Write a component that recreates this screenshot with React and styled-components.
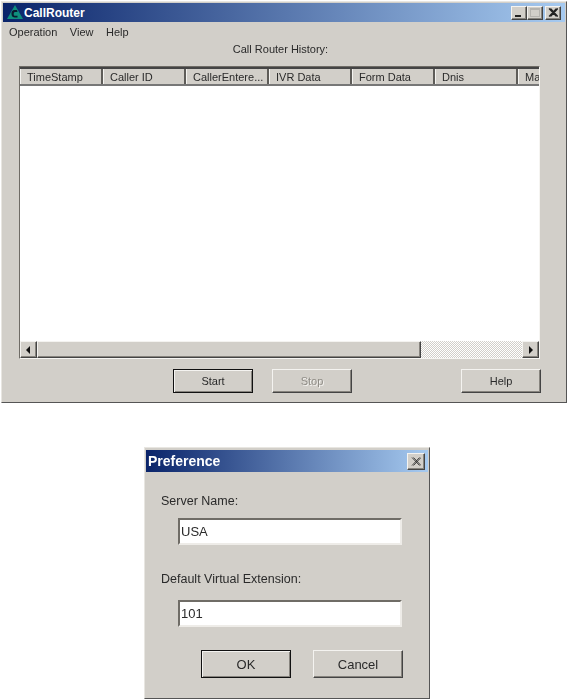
import React from "react";
import styled, { createGlobalStyle, css } from "styled-components";

const Global = createGlobalStyle`
  html, body { margin: 0; padding: 0; background: #fff; }
  body { width: 567px; height: 700px; overflow: hidden; font-family: "Liberation Sans", Arial, sans-serif; font-size: 11px; color: #2a2a2a; }
`;

const Page = styled.div`
  display: flex;
  flex-direction: column;
  align-items: flex-start;
  width: 567px;
  height: 700px;
  filter: blur(0.35px);
`;

const Frame = styled.div`
  box-sizing: border-box;
  display: flex;
  flex-direction: column;
  background: #d2cfc9;
  border: 1px solid;
  border-color: #e8e6e1 #555 #555 #e8e6e1;
  padding: 1px;
`;

const MainWindow = styled(Frame)`
  width: 566px;
  height: 402px;
  margin: 1px 0 0 1px;
`;

const Dialog = styled(Frame)`
  width: 286px;
  height: 252px;
  margin: 44px 0 0 144px;
  padding-top: 2px;
`;

const TitleBar = styled.div`
  display: flex;
  align-items: center;
  flex: none;
  height: ${p => p.$h}px;
  padding: 0 ${p => p.$pr}px 0 ${p => p.$pl}px;
  background: linear-gradient(90deg, #0a246a 0%, #a6caf0 100%);
  color: #fff;
  font: bold ${p => p.$fs}px "Liberation Sans", Arial, sans-serif;
`;

const TitleText = styled.span`
  flex: 1;
  margin-left: ${p => p.$ml || 0}px;
`;

const CaptionGroup = styled.div`
  display: flex;
`;

const Raised = css`
  box-sizing: border-box;
  background: #d2cfc9;
  border: 1px solid;
  border-color: #f4f3f0 #444 #444 #f4f3f0;
  box-shadow: inset -1px -1px 0 #87847e;
`;

const CaptionBtn = styled.div`
  ${Raised}
  width: ${p => p.$w || 16}px;
  height: ${p => p.$h || 14}px;
  margin-left: ${p => p.$gap || 0}px;
  display: flex;
  align-items: center;
  justify-content: center;
`;

const Menu = styled.div`
  display: flex;
  gap: 12.5px;
  padding: 4px 0 0 6px;
  height: 20px;
  box-sizing: border-box;
  flex: none;
  color: #2a2a2a;
`;

const Heading = styled.div`
  text-align: center;
  height: 24px;
  line-height: 14px;
  box-sizing: border-box;
  margin-left: -7px;
  flex: none;
`;

const List = styled.div`
  box-sizing: border-box;
  width: 521px;
  height: 293px;
  margin-left: 16px;
  display: flex;
  flex-direction: column;
  flex: none;
  border: 1px solid;
  border-color: #6f6c66 #f6f5f2 #f6f5f2 #6f6c66;
  background: #fff;
  overflow: hidden;
`;

const HeaderRow = styled.div`
  display: flex;
  flex: none;
  overflow: hidden;
  border-top: 2px solid #444;
  border-bottom: 2px solid #777;
  height: 15px;
`;

const HeaderCell = styled.div`
  flex: none;
  box-sizing: border-box;
  width: ${p => p.$w}px;
  padding-left: 6px;
  line-height: 16px;
  background: #d2cfc9;
  border-left: 1px solid #f4f3f0;
  border-right: 2px solid #5e5c58;
  white-space: nowrap;
  overflow: hidden;
`;

const ListBody = styled.div`
  flex: 1;
  background: #fff;
`;

const ScrollBar = styled.div`
  display: flex;
  flex: none;
  height: 17px;
  background: repeating-conic-gradient(#fff 0 25%, #d2cfc9 0 50%) 0 0 / 2px 2px;
`;

const ScrollBtn = styled.div`
  ${Raised}
  width: 17px;
  flex: none;
  display: flex;
  align-items: center;
  justify-content: center;
`;

const Thumb = styled.div`
  ${Raised}
  width: 384px;
  flex: none;
`;

const Spacer = styled.div`
  flex: 1;
`;

const Actions = styled.div`
  display: flex;
  align-items: flex-start;
  padding-left: ${p => p.$pl}px;
  margin-top: ${p => p.$mt}px;
  flex: none;
`;

const Button = styled.div`
  ${Raised}
  width: ${p => p.$w}px;
  height: ${p => p.$h}px;
  margin-left: ${p => p.$ml || 0}px;
  padding-bottom: ${p => (p.$big ? 0 : 1)}px;
  display: flex;
  align-items: center;
  justify-content: center;
  flex: none;
  color: ${p => (p.$disabled ? "#8f8c86" : "#2a2a2a")};
  ${p => p.$disabled && "text-shadow: 1px 1px 0 #f4f3f0;"}
  ${p => p.$big && "font-size: 13px;"}
  ${p => p.$default && css`
    border-color: #111;
    box-shadow: inset 1px 1px 0 #f4f3f0, inset -1px -1px 0 #87847e;
  `}
`;

const FieldLabel = styled.div`
  font-size: 12.5px;
  line-height: 14px;
  padding-left: 15px;
  margin-top: ${p => p.$mt}px;
  flex: none;
`;

const TextField = styled.div`
  box-sizing: border-box;
  width: 224px;
  height: 27px;
  margin: ${p => p.$mt}px 0 0 32px;
  background: #fff;
  border: 2px solid;
  border-color: #6f6c66 #eeece8 #eeece8 #6f6c66;
  font-size: 13px;
  line-height: 24px;
  padding-left: 1px;
  flex: none;
`;

const MenuItem = styled.span``;

const CloseIcon = ({ size = 10, weight = 1.1 }) => (
  <svg width={size} height={size - 1} viewBox="0 0 10 9">
    <path d="M1 0.5 L8.5 8.5 M2.5 0.5 L10 8.5 M8.5 0.5 L1 8.5 M10 0.5 L2.5 8.5" stroke="#222" strokeWidth={weight} fill="none" />
  </svg>
);
const MinIcon = () => (
  <svg width="10" height="9" viewBox="0 0 10 9"><rect x="1" y="7" width="6" height="2" fill="#222" /></svg>
);
const MaxIcon = () => (
  <svg width="10" height="9" viewBox="0 0 10 9"><rect x="0.5" y="0.5" width="9" height="8" fill="none" stroke="#b5b3ae" /><rect x="0" y="0" width="10" height="2" fill="#b5b3ae" /></svg>
);
const ArrowIcon = ({ right }) => (
  <svg width="5" height="8" viewBox="0 0 5 8">
    <path d={right ? "M1 0 L5 4 L1 8 Z" : "M4 0 L0 4 L4 8 Z"} fill="#111" />
  </svg>
);
const Logo = () => (
  <svg width="16" height="15" viewBox="0 0 16 15" style={{ flex: "none" }}>
    <path d="M8 0 L16 14 L0 14 Z" fill="#0f8f7e" />
    <path d="M8 5 C5 5 4.5 7 4.5 9 C4.5 11.5 6 12.5 8 12.5 L10.5 12.5 L10.5 10.8 L8 10.8 C7 10.8 6.7 10 6.7 9 C6.7 7.8 7.2 7 8 7 L10.5 7 L10 5 Z" fill="#0a1a30" />
  </svg>
);

const columns = [
  ["TimeStamp", 83], ["Caller ID", 83], ["CallerEntere...", 83],
  ["IVR Data", 83], ["Form Data", 83], ["Dnis", 83], ["Ma", 40],
];

export default function App() {
  return (
    <Page>
      <Global />
      <MainWindow>
        <TitleBar $h={19} $fs={12} $pl={4} $pr={4}>
          <Logo />
          <TitleText $ml={1}>CallRouter</TitleText>
          <CaptionGroup>
            <CaptionBtn><MinIcon /></CaptionBtn>
            <CaptionBtn><MaxIcon /></CaptionBtn>
            <CaptionBtn $gap={2}><CloseIcon /></CaptionBtn>
          </CaptionGroup>
        </TitleBar>
        <Menu>
          <MenuItem>Operation</MenuItem>
          <MenuItem>View</MenuItem>
          <MenuItem>Help</MenuItem>
        </Menu>
        <Heading>Call Router History:</Heading>
        <List>
          <HeaderRow>
            {columns.map(([t, w]) => <HeaderCell key={t} $w={w}>{t}</HeaderCell>)}
          </HeaderRow>
          <ListBody />
          <ScrollBar>
            <ScrollBtn><ArrowIcon /></ScrollBtn>
            <Thumb />
            <Spacer />
            <ScrollBtn><ArrowIcon right /></ScrollBtn>
          </ScrollBar>
        </List>
        <Actions $pl={170} $mt={10}>
          <Button $w={80} $h={24} $default>Start</Button>
          <Button $w={80} $h={24} $ml={19} $disabled>Stop</Button>
          <Button $w={80} $h={24} $ml={109}>Help</Button>
        </Actions>
      </MainWindow>
      <Dialog>
        <TitleBar $h={22} $fs={14} $pl={2} $pr={3}>
          <TitleText>Preference</TitleText>
          <CaptionBtn $w={18} $h={17}><CloseIcon weight={0.8} /></CaptionBtn>
        </TitleBar>
        <FieldLabel $mt={22}>Server Name:</FieldLabel>
        <TextField $mt={10}>USA</TextField>
        <FieldLabel $mt={27}>Default Virtual Extension:</FieldLabel>
        <TextField $mt={14}>101</TextField>
        <Actions $pl={55} $mt={23}>
          <Button $w={90} $h={28} $default $big>OK</Button>
          <Button $w={90} $h={28} $ml={22} $big>Cancel</Button>
        </Actions>
      </Dialog>
    </Page>
  );
}
